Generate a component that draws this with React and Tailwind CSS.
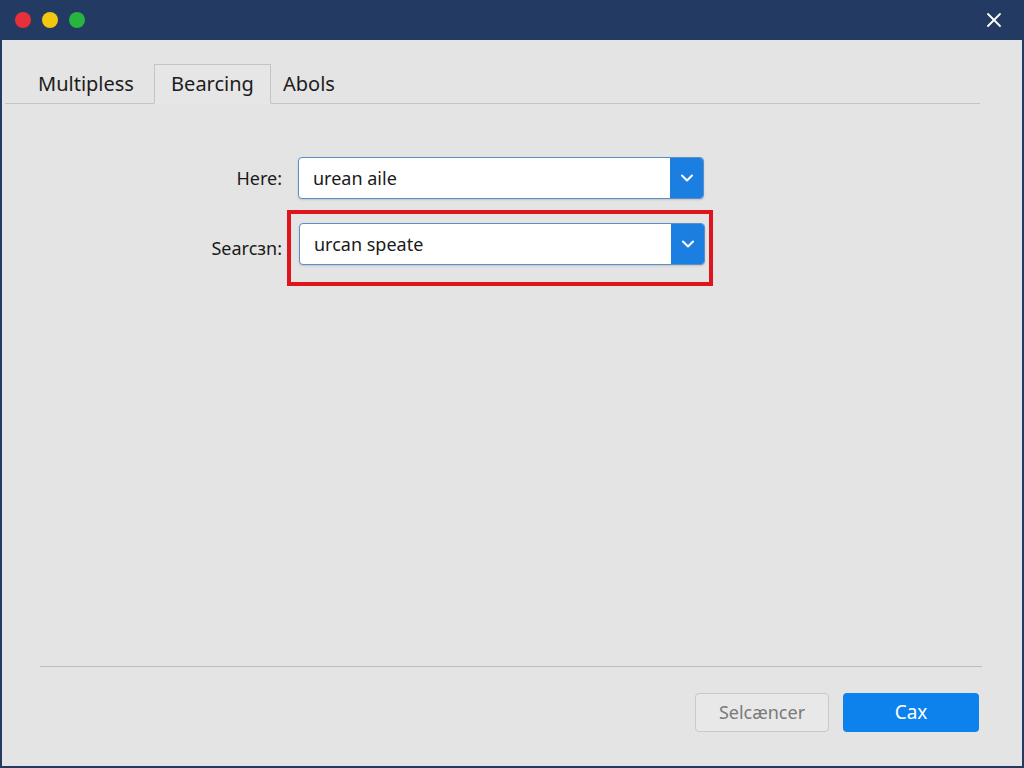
import { ChevronDown, X } from "lucide-react";

const tabs = [
    { nome: "Multipless", cls: "flex h-[39px] w-[128px] items-center pl-[12px] text-[20px] text-[#1c1c1c]" },
    { nome: "Bearcing", cls: "-mb-px flex h-[40px] w-[117px] items-center justify-center border border-b-[#e6e6e6] border-[#c4c4c4] bg-[#e6e6e6] text-[20px] text-[#1c1c1c]" },
    { nome: "Abols", cls: "flex h-[39px] items-center pl-[12px] text-[20px] text-[#1c1c1c]" },
];

function Campo({ valor }) {
    return (
        <div className="flex h-[42px] w-[406px] overflow-hidden rounded-[4px] border border-[#5b8fc9] bg-white shadow-[0_1px_2px_rgba(0,0,0,0.15)]">
            <div className="flex flex-1 items-center pl-[14px] text-[18px] text-[#1a1a1a]">{valor}</div>
            <div className="flex w-[33px] items-center justify-center bg-[#1a7fe0]">
                <ChevronDown className="h-5 w-5 text-white" strokeWidth={2.5} />
            </div>
        </div>
    );
}

export default function App() {
    return (
        <div className="flex h-[768px] w-[1024px] flex-col bg-[#233a62] font-['Noto_Sans',Arial,sans-serif]">
            <header className="flex h-[40px] items-center justify-between pl-[15px] pr-[18px]">
                <div className="flex gap-[11px]">
                    <span className="h-4 w-4 rounded-full bg-[#e8303a]"></span>
                    <span className="h-4 w-4 rounded-full bg-[#f2c80f]"></span>
                    <span className="h-4 w-4 rounded-full bg-[#27b53f]"></span>
                </div>
                <X className="h-6 w-6 text-white" strokeWidth={1.8} />
            </header>
            <main className="mx-[2px] mb-[2px] flex flex-1 flex-col bg-[#e4e4e4]">
                <nav className="ml-[3px] mr-[42px] mt-[25px] flex h-[39px] items-end border-b border-[#c4c4c4] pl-[21px]">
                    {tabs.map((tab) => (
                        <div key={tab.nome} className={tab.cls}>
                            {tab.nome}
                        </div>
                    ))}
                </nav>
                <section className="mt-[53px] flex flex-col">
                    <div className="flex items-center">
                        <label className="w-[296px] pr-[16px] text-right text-[18px] text-[#1a1a1a]">Here:</label>
                        <Campo valor="urean aile" />
                    </div>
                    <div className="mt-[11px] flex items-center">
                        <label className="w-[296px] pr-[16px] text-right text-[18px] text-[#1a1a1a]">Searcзn:</label>
                        <div className="-ml-[11px] border-[4px] border-[#e0141c] pb-[17px] pl-[8px] pr-[4px] pt-[9px]">
                            <Campo valor="urcan speate" />
                        </div>
                    </div>
                </section>
                <div className="flex-1"></div>
                <div className="ml-[38px] mr-[40px] border-t border-[#bdbdbd]"></div>
                <footer className="flex justify-end gap-[14px] pb-[34px] pr-[43px] pt-[26px]">
                    <button className="h-[39px] w-[134px] rounded-[4px] border border-[#c8c8c8] bg-[#e8e8e8] text-[18px] text-[#7a7a7a]">
                        Selcæncer
                    </button>
                    <button className="h-[39px] w-[136px] rounded-[4px] bg-[#0d82ec] text-[19px] text-white">
                        Cax
                    </button>
                </footer>
            </main>
        </div>
    );
}
